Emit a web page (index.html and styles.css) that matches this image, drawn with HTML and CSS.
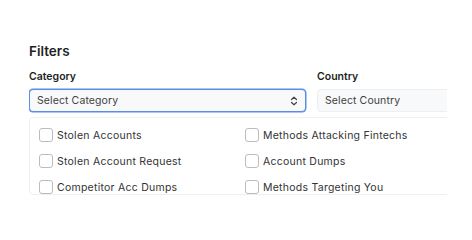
FILE: index.html
```html
<!DOCTYPE html>
<html lang="en">
<head>
    <meta charset="UTF-8">
    <title>Filters</title>
    <link rel="stylesheet" href="styles.css">
</head>
<body>
    <main class="frame">
        <section class="filters">
            <h2 class="filters-title">Filters</h2>
            <div class="filters-grid">
                <div class="field">
                    <label class="field-label">Category</label>
                    <div class="select select--active">
                        <span>Select Category</span>
                        <svg class="select-arrows" width="8" height="10" viewBox="0 0 8 10" fill="none" stroke="#444" stroke-width="1.2" stroke-linecap="round" stroke-linejoin="round">
                            <path d="M1.5 3.5 L4 1.2 L6.5 3.5" />
                            <path d="M1.5 6.5 L4 8.8 L6.5 6.5" />
                        </svg>
                    </div>
                </div>
                <div class="field">
                    <label class="field-label">Country</label>
                    <div class="select">
                        <span>Select Country</span>
                    </div>
                </div>
            </div>
            <div class="dropdown">
                <label class="option"><span class="box"></span>Stolen Accounts</label>
                <label class="option"><span class="box"></span>Methods Attacking Fintechs</label>
                <label class="option"><span class="box"></span>Stolen Account Request</label>
                <label class="option"><span class="box"></span>Account Dumps</label>
                <label class="option"><span class="box"></span>Competitor Acc Dumps</label>
                <label class="option"><span class="box"></span>Methods Targeting You</label>
            </div>
        </section>
    </main>
</body>
</html>
```

FILE: styles.css
```css
html,
body {
    margin: 0;
    padding: 0;
    background: #ffffff;
}

body {
    font-family: Inter, 'Liberation Sans', sans-serif;
    color: #222;
    width: 472px;
    height: 240px;
    overflow: hidden;
}

.frame {
    padding: 43px 0 0 29px;
}

.filters {
    width: 418px;
    height: 154px;
    overflow: hidden;
}

.filters-title {
    margin: 0 0 10px 0;
    font-size: 13.5px;
    font-weight: 600;
    line-height: 17px;
    color: #1f1f1f;
}

.filters-grid {
    display: grid;
    grid-template-columns: 277px 277px;
    gap: 11px;
}

.field-label {
    display: block;
    font-size: 10.5px;
    font-weight: 600;
    line-height: 14px;
    margin-bottom: 5px;
    color: #1f1f1f;
}

.select {
    box-sizing: border-box;
    height: 23px;
    padding: 0 7px 0 7px;
    display: flex;
    align-items: center;
    justify-content: space-between;
    background: #f8f9fa;
    border: 1px solid #eceef0;
    border-radius: 4px;
    font-size: 10.5px;
    letter-spacing: 0.1px;
    color: #3f3f3f;
}

.select--active {
    border-color: #5a8ee6;
    box-shadow: 0 0 0 0.5px #5a8ee6;
}

.dropdown {
    margin-top: 5px;
    box-sizing: border-box;
    width: 440px;
    padding: 10px 0 0 9px;
    border: 1px solid #eef0f2;
    border-radius: 4px;
    display: grid;
    grid-template-columns: 206px 1fr;
    row-gap: 12px;
}

.option {
    display: flex;
    align-items: center;
    gap: 4px;
    height: 14px;
    font-size: 10.5px;
    letter-spacing: 0.25px;
    color: #333;
}

.box {
    box-sizing: border-box;
    width: 14px;
    height: 14px;
    border: 1px solid #bcbcbc;
    border-radius: 3px;
    background: #fff;
}
```
